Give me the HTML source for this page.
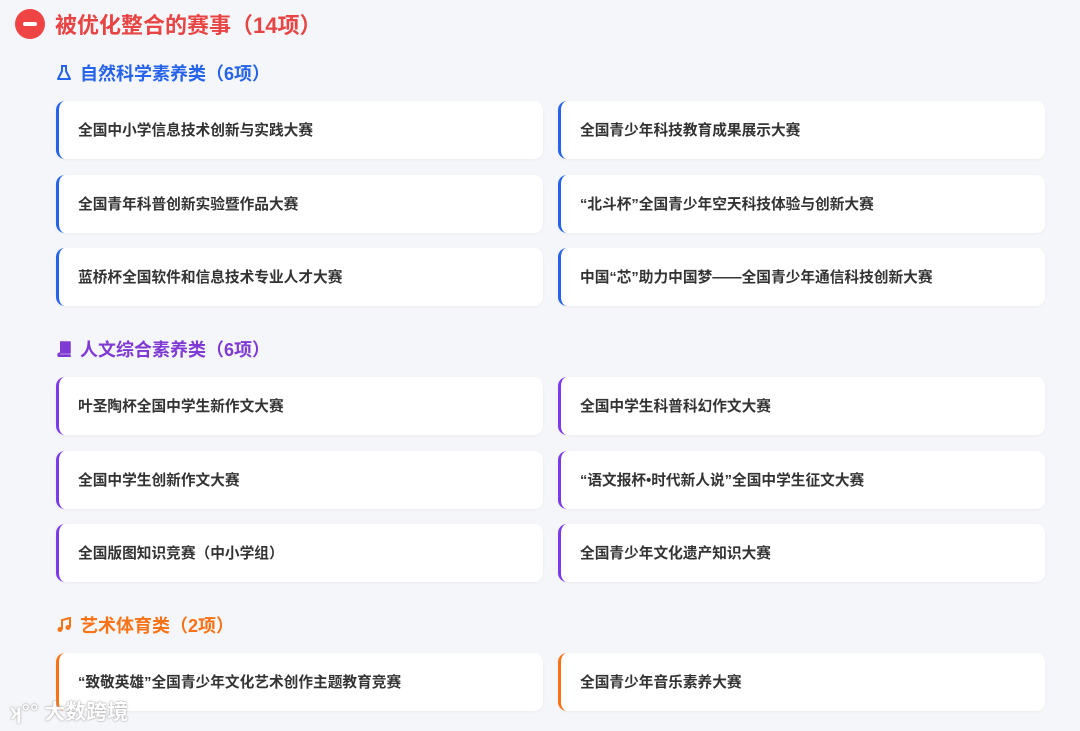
<!DOCTYPE html>
<html><head><meta charset="utf-8"><style>
*{margin:0;padding:0;box-sizing:border-box}
body{width:1080px;height:731px;background:#f5f6fa;font-family:"Liberation Sans","Noto Sans CJK SC",sans-serif;position:relative;overflow:hidden}
.h1{position:absolute;left:15px;top:9px;height:30px;display:flex;align-items:center}
.h1 .c{width:30px;height:30px;border-radius:50%;background:#ef4444;position:relative;margin-right:10px}
.h1 .c:after{content:"";position:absolute;left:8px;top:13px;width:14px;height:4px;background:#fff;border-radius:2px}
.h1 span{font-size:22px;font-weight:bold;color:#e84444}
.h2{position:absolute;left:56px;font-size:18px;font-weight:bold;display:flex;align-items:center;height:24px}
.h2 svg{margin-right:8px}
.card{position:absolute;width:487px;height:58px;background:#fff;border-radius:9px;border-left:3px solid;box-shadow:0 1px 3px rgba(0,0,0,0.04);font-size:14.7px;font-weight:bold;color:#333;padding-left:19px;line-height:60px}
.b{border-color:#2563eb}.p{border-color:#7c3aed}.o{border-color:#f97316}
.wm{position:absolute;left:10px;top:696px;font-size:21px;font-weight:bold;color:#fff;text-shadow:0 0 2px #999,0 0 1px #999;opacity:.9}
</style></head><body>
<div class="h1"><div class="c"></div><span>被优化整合的赛事（14项）</span></div>

<div class="h2" style="top:61px;color:#2563eb"><svg width="16" height="16" viewBox="0 0 16 16"><path d="M5 1h6M6 1v5L2 14h12L10 6V1" fill="none" stroke="#2563eb" stroke-width="2" stroke-linejoin="round"/></svg>自然科学素养类（6项）</div>
<div class="card b" style="left:56px;top:101px">全国中小学信息技术创新与实践大赛</div>
<div class="card b" style="left:558px;top:101px">全国青少年科技教育成果展示大赛</div>
<div class="card b" style="left:56px;top:175px">全国青年科普创新实验暨作品大赛</div>
<div class="card b" style="left:558px;top:175px">“北斗杯”全国青少年空天科技体验与创新大赛</div>
<div class="card b" style="left:56px;top:248px">蓝桥杯全国软件和信息技术专业人才大赛</div>
<div class="card b" style="left:558px;top:248px">中国“芯”助力中国梦——全国青少年通信科技创新大赛</div>

<div class="h2" style="top:337px;color:#7e3ad3"><svg width="16" height="16" viewBox="0 0 16 16"><path d="M4 1h10v11H4a2 2 0 0 0 0 4h10v-2H4" fill="#7e3ad3" stroke="#7e3ad3" stroke-width="1.5" stroke-linejoin="round"/></svg>人文综合素养类（6项）</div>
<div class="card p" style="left:56px;top:377px">叶圣陶杯全国中学生新作文大赛</div>
<div class="card p" style="left:558px;top:377px">全国中学生科普科幻作文大赛</div>
<div class="card p" style="left:56px;top:451px">全国中学生创新作文大赛</div>
<div class="card p" style="left:558px;top:451px">“语文报杯•时代新人说”全国中学生征文大赛</div>
<div class="card p" style="left:56px;top:524px">全国版图知识竞赛（中小学组）</div>
<div class="card p" style="left:558px;top:524px">全国青少年文化遗产知识大赛</div>

<div class="h2" style="top:613px;color:#f97316"><svg width="16" height="16" viewBox="0 0 16 16"><path d="M6 12V3l8-2v9" fill="none" stroke="#f97316" stroke-width="2"/><circle cx="4" cy="12.5" r="2.5" fill="#f97316"/><circle cx="12" cy="10.5" r="2.5" fill="#f97316"/></svg>艺术体育类（2项）</div>
<div class="card o" style="left:56px;top:653px">“致敬英雄”全国青少年文化艺术创作主题教育竞赛</div>
<div class="card o" style="left:558px;top:653px">全国青少年音乐素养大赛</div>

<div class="wm">ʞ°° 大数跨境</div>
</body></html>
